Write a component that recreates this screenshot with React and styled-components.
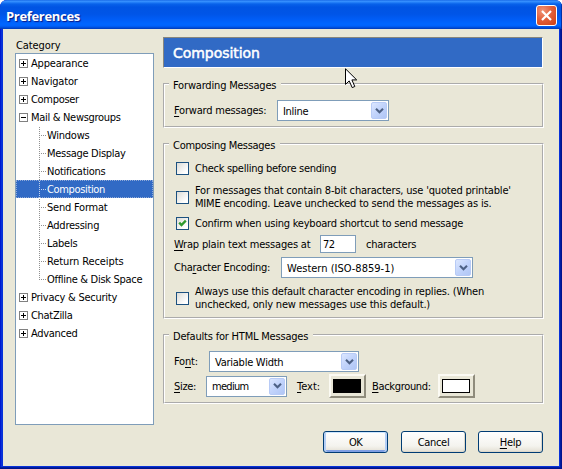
import React from 'react';
import styled, { createGlobalStyle } from 'styled-components';

const Global = createGlobalStyle`
  * { box-sizing: border-box; }
  body {
    margin: 0;
    background: #fff;
    font: 11px/13px "DejaVu Sans Condensed", "DejaVu Sans", sans-serif;
    color: #000;
    cursor: default;
  }
  u {
    text-decoration-thickness: 1px;
    text-underline-offset: 2px;
    text-decoration-skip-ink: none;
  }
`;

const Dialog = styled.div`
  position: relative;
  display: flex;
  flex-direction: column;
  width: 562px;
  height: 469px;
  overflow: hidden;
  border-radius: 7px 7px 0 0;
  background: #0831d9;
  box-shadow: inset -1px -1px #00138c, inset -2px -2px #001ea0, inset 1px 0 #0019cf;
`;

const TitleBar = styled.header`
  display: flex;
  align-items: center;
  justify-content: space-between;
  height: 29px;
  flex: none;
  padding: 2px 5px 0 6px;
  background: linear-gradient(
    #0a5be0 0, #3d95ff 1px, #2a86fb 2px, #0862ea 4px, #0054e3 7px, #0055e7 14px,
    #005cf5 19px, #0066ff 24px, #0062fb 26px, #0049d0 28px, #0038b4 29px
  );
  box-shadow: inset -1px 0 #0030a8;
`;

const WindowTitle = styled.h1`
  margin: 0;
  font: bold 13px/18px "Open Sans", sans-serif;
  letter-spacing: -0.32px;
  color: #fff;
  text-shadow: 1px 1px 1px #0a1883;
`;

const CloseButton = styled.button`
  display: flex;
  align-items: center;
  justify-content: center;
  width: 21px;
  height: 21px;
  padding: 0;
  border: 1px solid #fff;
  border-radius: 3px;
  background: radial-gradient(circle at 30% 25%, #f09478 0, #e2603c 45%, #cf3f12 100%);
`;

const Client = styled.main`
  display: flex;
  flex-direction: column;
  flex: 1;
  margin: 0 3px 3px;
  padding-right: 15px;
  background: #e9e7d7;
`;

const Columns = styled.div`
  display: flex;
  gap: 9px;
  padding-left: 12px;
`;

const Sidebar = styled.nav`
  width: 139px;
  padding-top: 10px;
`;

const Text = styled.span`
  display: block;
  white-space: pre;
  letter-spacing: ${(p) => p.$ls ?? -0.22}px;
`;

const SidebarTitle = styled(Text)`
  padding-left: 1px;
`;

const Tree = styled.ul`
  height: 372px;
  margin: 1px 0 0;
  padding: 0;
  list-style: none;
  border: 1px solid #7f9db9;
  background: #fff;
`;

const TreeRow = styled.li`
  display: flex;
  align-items: center;
  height: 18px;
  padding-left: 3px;
`;

const Toggle = styled.svg`
  flex: none;
  width: 9px;
  height: 9px;
  margin-right: 3px;
`;

const ChildRow = styled(TreeRow)`
  padding-left: 22px;
  color: ${(p) => (p.$selected ? '#fff' : '#000')};
  background: ${(p) => (p.$selected ? '#316ac5' : 'transparent')};
  outline: ${(p) => (p.$selected ? '1px dotted #8fa9d8' : 'none')};
  outline-offset: -1px;
`;

const Branch = styled.svg`
  flex: none;
  width: 9px;
  height: 18px;
`;

const Panel = styled.section`
  display: flex;
  flex-direction: column;
  width: 381px;
  padding-top: 8px;
`;

const PanelHeader = styled.h2`
  width: 380px;
  height: 31px;
  margin: 0 0 10px;
  padding-left: 9px;
  border: 1px solid;
  border-color: #87867e #fff #fff #87867e;
  background: #316ac5;
  color: #fff;
  font: 14px/30px "DejaVu Sans", sans-serif;
  letter-spacing: -0.05px;
  -webkit-text-stroke: 0.5px #fff;
`;

const Group = styled.fieldset`
  display: block;
  height: ${(p) => p.$height}px;
  min-width: 0;
  margin: 0 0 ${(p) => p.$after ?? 0}px;
  padding: 0 0 0 9px;
  border: 2px groove #fff;
`;

const Legend = styled.legend`
  height: 12px;
  margin-left: -5px;
  padding: 0 5px 0 4px;
  line-height: 15px;
`;

const Row = styled.div`
  display: flex;
  align-items: center;
  height: ${(p) => p.$height}px;
  margin-top: ${(p) => p.$top}px;
`;

const Label = styled(Text)`
  width: ${(p) => p.$width}px;
  flex: none;
`;

const SelectBox = styled.div`
  display: flex;
  align-items: center;
  justify-content: space-between;
  flex: none;
  width: ${(p) => p.$width}px;
  height: 21px;
  margin-right: ${(p) => p.$after ?? 0}px;
  padding: 1px 1px 1px 5px;
  border: 1px solid #7f9db9;
  background: #fff;
`;

const SelectValue = styled(Text)`
  padding-top: 1px;
`;

const SelectArrow = styled.span`
  display: flex;
  align-items: center;
  justify-content: center;
  width: 16px;
  height: 17px;
  border: 1px solid #b8cbf6;
  border-radius: 2px;
  background: linear-gradient(135deg, #dce7ff, #c1d3fb 50%, #b0c6f5);
`;

const CheckRow = styled(Row)`
  padding-left: 2px;
  gap: 6px;
`;

const CheckMark = styled.span`
  display: flex;
  flex: none;
  align-items: center;
  justify-content: center;
  width: 13px;
  height: 13px;
  border: 1px solid #1c5180;
  background: linear-gradient(135deg, #dcdcd7, #fff 80%);
`;

const NumberField = styled.input`
  width: 36px;
  height: 18px;
  margin: 0 10px 0 0;
  padding: 0 0 0 2px;
  border: 1px solid #7f9db9;
  background: #fff;
  font: inherit;
  letter-spacing: -0.6px;
`;

const ColorButton = styled.button`
  flex: none;
  width: 37px;
  height: 24px;
  margin-right: ${(p) => p.$after ?? 0}px;
  padding: 3px 3px 4px 2px;
  border: 2px solid;
  border-color: #fbfaf3 #8f8c7c #8f8c7c #fbfaf3;
  background: #e9e7d7;
`;

const Swatch = styled.span`
  display: block;
  width: 28px;
  height: 14px;
  border: 1px solid #000;
  background: ${(p) => p.$color};
`;

const Footer = styled.footer`
  display: flex;
  justify-content: flex-end;
  margin-top: 6px;
  padding-right: 1px;
`;

const PushButton = styled.button`
  display: flex;
  align-items: center;
  justify-content: center;
  width: 65px;
  height: 22px;
  margin-left: ${(p) => p.$before ?? 0}px;
  padding: 0;
  border: 1px solid #003c74;
  border-radius: 3px;
  background: linear-gradient(#fff, #f4f3ee 70%, #e3dfd3);
  box-shadow: ${(p) =>
    p.$default
      ? 'inset 0 1px #cee7ff, inset 2px 0 #b5cff5, inset -2px 0 #b5cff5, inset 0 -2px #7f9fe3'
      : 'inset -1px -1px #dcd8cb'};
  color: #000;
  font: inherit;
`;

const Pointer = styled.svg`
  position: absolute;
  left: 345px;
  top: 68px;
  width: 13px;
  height: 21px;
`;

const topItems = [
  { label: 'Appearance', ls: -0.2 },
  { label: 'Navigator', ls: -0.2 },
  { label: 'Composer', ls: -0.3 },
  { label: 'Mail & Newsgroups', ls: -0.3, open: true },
];
const mailItems = [
  { label: 'Windows', ls: -0.25 },
  { label: 'Message Display', ls: -0.3 },
  { label: 'Notifications', ls: -0.27 },
  { label: 'Composition', ls: -0.35, selected: true },
  { label: 'Send Format', ls: -0.22 },
  { label: 'Addressing', ls: -0.25 },
  { label: 'Labels', ls: -0.25 },
  { label: 'Return Receipts', ls: -0.1 },
  { label: 'Offline & Disk Space', ls: -0.3 },
];
const bottomItems = [
  { label: 'Privacy & Security', ls: -0.24 },
  { label: 'ChatZilla', ls: -0.3 },
  { label: 'Advanced', ls: -0.3 },
];

function Category({ item }) {
  return (
    <TreeRow>
      <Toggle viewBox="0 0 9 9" shapeRendering="crispEdges">
        <rect x="0.5" y="0.5" width="8" height="8" fill="#fff" stroke="#808080" />
        <path d={item.open ? 'M2 4.5h5' : 'M2 4.5h5M4.5 2v5'} stroke="#000" />
      </Toggle>
      <Text $ls={item.ls}>{item.label}</Text>
    </TreeRow>
  );
}

function SubCategory({ item, last }) {
  return (
    <ChildRow $selected={item.selected}>
      <Branch viewBox="0 0 9 18" shapeRendering="crispEdges">
        <path
          d={last ? 'M1.5 1v9M3 9.5h5' : 'M1.5 1v17M3 9.5h5'}
          stroke={item.selected ? '#c5d5ee' : '#909090'}
          strokeDasharray="1 1"
        />
      </Branch>
      <Text $ls={item.ls}>{item.label}</Text>
    </ChildRow>
  );
}

function Select({ value, width, after, ls }) {
  return (
    <SelectBox $width={width} $after={after}>
      <SelectValue $ls={ls}>{value}</SelectValue>
      <SelectArrow>
        <svg width="9" height="6" viewBox="0 0 9 6">
          <path d="M1 0.8l3.5 3.5L8 0.8" fill="none" stroke="#4d6185" strokeWidth="2.1" />
        </svg>
      </SelectArrow>
    </SelectBox>
  );
}

function Checkbox({ checked }) {
  return (
    <CheckMark>
      {checked && (
        <svg width="9" height="9" viewBox="0 0 9 9">
          <path d="M1.2 3.6L3.5 6L7.8 1.6" fill="none" stroke="#2f9a2f" strokeWidth="2.3" />
        </svg>
      )}
    </CheckMark>
  );
}

export default function App() {
  return (
    <>
      <Global />
      <Dialog>
        <TitleBar>
          <WindowTitle>Preferences</WindowTitle>
          <CloseButton aria-label="Close">
            <svg width="13" height="13" viewBox="0 0 13 13">
              <path d="M2 2l9 9M11 2l-9 9" stroke="#fff" strokeWidth="2.2" />
            </svg>
          </CloseButton>
        </TitleBar>
        <Client>
          <Columns>
            <Sidebar>
              <SidebarTitle $ls={-0.1}>Category</SidebarTitle>
              <Tree>
                {topItems.map((item) => <Category key={item.label} item={item} />)}
                {mailItems.map((item, i) => (
                  <SubCategory key={item.label} item={item} last={i === mailItems.length - 1} />
                ))}
                {bottomItems.map((item) => <Category key={item.label} item={item} />)}
              </Tree>
            </Sidebar>
            <Panel>
              <PanelHeader>Composition</PanelHeader>

              <Group $height={50} $after={10}>
                <Legend><Text $ls={-0.18}>Forwarding Messages</Text></Legend>
                <Row $top={10} $height={21}>
                  <Label $width={103} $ls={-0.2}><u>F</u>orward messages:</Label>
                  <Select value="Inline" width={112} ls={-0.3} />
                </Row>
              </Group>

              <Group $height={181} $after={10}>
                <Legend><Text $ls={-0.28}>Composing Messages</Text></Legend>
                <CheckRow $top={12} $height={13}>
                  <Checkbox />
                  <Text $ls={-0.27}>Check spelling before sending</Text>
                </CheckRow>
                <CheckRow $top={9} $height={26}>
                  <Checkbox />
                  <div>
                    <Text $ls={-0.18}>For messages that contain 8-bit characters, use 'quoted printable'</Text>
                    <Text $ls={-0.2}>MIME encoding. Leave unchecked to send the messages as is.</Text>
                  </div>
                </CheckRow>
                <CheckRow $top={7} $height={13}>
                  <Checkbox checked />
                  <Text $ls={-0.22}>Confirm when using keyboard shortcut to send message</Text>
                </CheckRow>
                <Row $top={5} $height={18}>
                  <Label $width={146} $ls={-0.19}><u>W</u>rap plain text messages at</Label>
                  <NumberField defaultValue="72" />
                  <Text $ls={-0.24}>characters</Text>
                </Row>
                <Row $top={4} $height={21}>
                  <Label $width={107} $ls={-0.25}>Cha<u>r</u>acter Encoding:</Label>
                  <Select value="Western (ISO-8859-1)" width={192} ls={0} />
                </Row>
                <CheckRow $top={7} $height={26}>
                  <Checkbox />
                  <div>
                    <Text $ls={-0.19}>Always use this default character encoding in replies. (When</Text>
                    <Text $ls={-0.19}>unchecked, only new messages use this default.)</Text>
                  </div>
                </CheckRow>
              </Group>

              <Group $height={75}>
                <Legend><Text $ls={-0.2}>Defaults for HTML Messages</Text></Legend>
                <Row $top={10} $height={21}>
                  <Label $width={35} $ls={-0.2}>Fo<u>n</u>t:</Label>
                  <Select value="Variable Width" width={150} ls={-0.25} />
                </Row>
                <Row $top={2} $height={24}>
                  <Label $width={32} $ls={-0.3}><u>S</u>ize:</Label>
                  <Select value="medium" width={81} after={10} ls={-0.7} />
                  <Label $width={32} $ls={0}><u>T</u>ext:</Label>
                  <ColorButton $after={6} aria-label="Text color"><Swatch $color="#000" /></ColorButton>
                  <Label $width={66} $ls={-0.33}><u>B</u>ackground:</Label>
                  <ColorButton aria-label="Background color"><Swatch $color="#fff" /></ColorButton>
                </Row>
              </Group>
            </Panel>
          </Columns>
          <Footer>
            <PushButton $default><Text $ls={-0.6}>OK</Text></PushButton>
            <PushButton $before={13}><Text $ls={-0.3}>Cancel</Text></PushButton>
            <PushButton $before={12}><Text $ls={-0.3}><u>H</u>elp</Text></PushButton>
          </Footer>
        </Client>
        <Pointer viewBox="0 0 13 21">
          <path
            d="M0.5 0.8V16.4L4.2 12.9L7.2 19.6L9.8 18.5L6.9 11.9H11.7Z"
            fill="#fff"
            stroke="#000"
          />
        </Pointer>
      </Dialog>
    </>
  );
}
